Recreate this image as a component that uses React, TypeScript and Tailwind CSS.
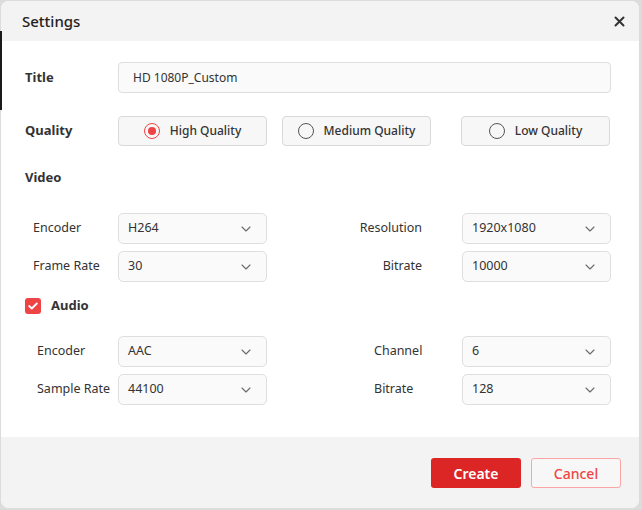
import React from "react";

const font = { fontFamily: '"Noto Sans", "Open Sans", sans-serif' };

function Chevron() {
  return (
    <svg width="10" height="6" viewBox="0 0 10 6" fill="none">
      <path d="M1 1l4 4 4-4" stroke="#6b6b6b" strokeWidth="1.1" strokeLinecap="round" strokeLinejoin="round" />
    </svg>
  );
}

function Select({ value }: { value: string }) {
  return (
    <div className="flex items-center justify-between w-[149px] h-[31px] rounded-[5px] border border-[#dedede] bg-[#fafafa] pl-[9px] pr-[15px] text-[12.5px] text-[#333]">
      <span>{value}</span>
      <Chevron />
    </div>
  );
}

function Radio({ checked, label, className }: { checked?: boolean; label: string; className?: string }) {
  return (
    <div className={"flex items-center justify-center gap-[10px] w-[149px] h-[30px] rounded-[4px] border border-[#d9d9d9] bg-[#f7f7f7] " + (className ?? "")}>
      {checked ? (
        <span className="flex items-center justify-center w-[16px] h-[16px] rounded-full border-[1.5px] border-[#ef4444]">
          <span className="w-[8px] h-[8px] rounded-full bg-[#ef4444]" />
        </span>
      ) : (
        <span className="w-[16px] h-[16px] rounded-full border border-[#555]" />
      )}
      <span className="text-[12px] font-medium text-[#333]">{label}</span>
    </div>
  );
}

function Row({
  leftLabel,
  leftValue,
  rightLabel,
  rightValue,
  leftPad,
  rightAlign,
}: {
  leftLabel: string;
  leftValue: string;
  rightLabel: string;
  rightValue: string;
  leftPad: string;
  rightAlign: boolean;
}) {
  return (
    <div className="flex items-center h-[31px]">
      <div className={"w-[93px] text-[12.5px] text-[#333] " + leftPad}>{leftLabel}</div>
      <Select value={leftValue} />
      <div className="flex-1 flex">
        {rightAlign ? (
          <div className="w-full text-right pr-[40px] text-[12.5px] text-[#333]">{rightLabel}</div>
        ) : (
          <div className="pl-[107px] text-[12.5px] text-[#333]">{rightLabel}</div>
        )}
      </div>
      <Select value={rightValue} />
    </div>
  );
}

export default function App() {
  return (
    <div className="relative w-[642px] h-[510px] bg-[#dcdcdc] pt-[1px] pl-[1px]" style={font}>
      <div className="absolute left-0 top-[31px] w-[2px] h-[79px] bg-[#1a1a1a]" />
      <div className="w-[638px] h-[507px] rounded-[8px] overflow-hidden bg-white flex flex-col">
        <div className="h-[40px] bg-[#f3f3f3] flex items-center justify-between pl-[21px] pr-[14px]">
          <span className="text-[15px] font-medium text-[#222]">Settings</span>
          <svg width="11" height="11" viewBox="0 0 11 11">
            <path d="M1.5 1.5l8 8M9.5 1.5l-8 8" stroke="#333" strokeWidth="2" strokeLinecap="round" />
          </svg>
        </div>
        <div className="flex-1 bg-white pl-[24px] pr-[28px]">
          <div className="flex items-center mt-[21px] h-[31px]">
            <div className="w-[93px] text-[13px] font-bold text-[#333]">Title</div>
            <div className="flex-1 h-[31px] flex items-center rounded-[4px] border border-[#dedede] bg-[#fafafa] pl-[14px] pt-[1px] text-[12px] text-[#333]">
              HD 1080P_Custom
            </div>
          </div>
          <div className="flex items-center mt-[23px] h-[30px]">
            <div className="w-[93px] text-[13px] font-bold text-[#333]">Quality</div>
            <Radio checked label="High Quality" />
            <Radio label="Medium Quality" className="ml-[15px]" />
            <Radio label="Low Quality" className="ml-[30px]" />
          </div>
          <div className="mt-[22px] h-[20px] flex items-center text-[13px] font-bold text-[#333]">Video</div>
          <div className="mt-[25px] flex flex-col gap-[7px]">
            <Row leftLabel="Encoder" leftValue="H264" rightLabel="Resolution" rightValue="1920x1080" leftPad="pl-[8px]" rightAlign />
            <Row leftLabel="Frame Rate" leftValue="30" rightLabel="Bitrate" rightValue="10000" leftPad="pl-[8px]" rightAlign />
          </div>
          <div className="mt-[15px] flex items-center h-[18px] gap-[10px]">
            <span className="w-[16px] h-[16px] rounded-[3px] bg-[#ef4444] flex items-center justify-center">
              <svg width="10" height="8" viewBox="0 0 10 8" fill="none">
                <path d="M1.2 4l2.6 2.5L8.8 1.5" stroke="white" strokeWidth="1.8" strokeLinecap="round" strokeLinejoin="round" />
              </svg>
            </span>
            <span className="text-[13px] font-bold text-[#333]">Audio</span>
          </div>
          <div className="mt-[21px] flex flex-col gap-[7px]">
            <Row leftLabel="Encoder" leftValue="AAC" rightLabel="Channel" rightValue="6" leftPad="pl-[12px]" rightAlign={false} />
            <Row leftLabel="Sample Rate" leftValue="44100" rightLabel="Bitrate" rightValue="128" leftPad="pl-[12px]" rightAlign={false} />
          </div>
        </div>
        <div className="h-[71px] bg-[#f3f3f3] flex items-start justify-end pt-[21px] pr-[18px] gap-[10px]">
          <button className="w-[90px] h-[30px] rounded-[3px] bg-[#dc2626] text-white text-[14px] font-semibold">Create</button>
          <button className="w-[90px] h-[30px] rounded-[3px] border border-[#fca5a5] bg-[#f7f7f7] text-[#ef4444] text-[14px] font-medium">Cancel</button>
        </div>
      </div>
    </div>
  );
}
